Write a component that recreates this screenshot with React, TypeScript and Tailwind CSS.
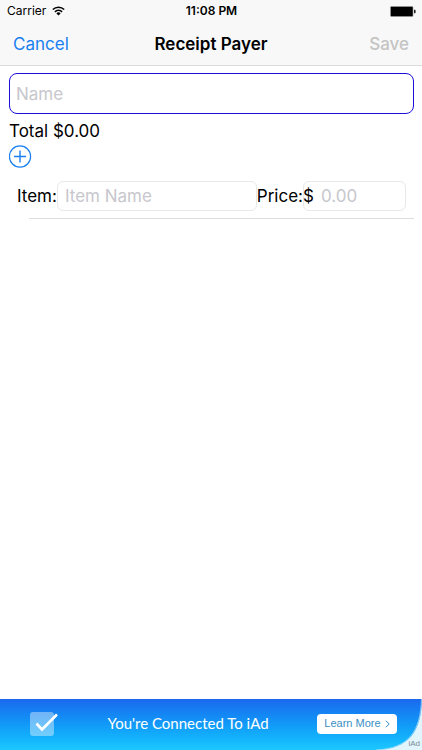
import { useState } from "react";

function StatusBar() {
  return (
    <div className="grid h-[22px] grid-cols-3 items-center pr-1.5 pl-[7px] text-xs text-black">
      <div className="flex items-center gap-1.5">
        <span>Carrier</span>
        <svg viewBox="0 0 13 10" className="h-[10px] w-[13px]" fill="none" stroke="#000" strokeWidth="1.6">
          <path d="M0.8 3.5a8.2 8.2 0 0 1 11.4 0" />
          <path d="M2.9 5.8a5.2 5.2 0 0 1 7.2 0" />
          <path d="M6.5 9.6 4.4 7.4a3 3 0 0 1 4.2 0z" fill="#000" stroke="none" />
        </svg>
      </div>
      <span className="text-center font-semibold">11:08 PM</span>
      <svg viewBox="0 0 26 11" className="h-[11px] w-[26px] justify-self-end">
        <rect x="0.5" y="0.5" width="22.5" height="10" rx="1" fill="#000" stroke="#999" strokeWidth="0.6" />
        <path d="M24 3.8h0.8a0.8 0.8 0 0 1 0.8 0.8v1.8a0.8 0.8 0 0 1-0.8 0.8H24z" fill="#222" />
      </svg>
    </div>
  );
}

function NavBar({ canSave }: { canSave: boolean }) {
  return (
    <nav className="grid h-[43px] grid-cols-[1fr_auto_1fr] items-center px-[13px] text-[17px] leading-6">
      <button type="button" className="justify-self-start text-[#1a80f0]">
        Cancel
      </button>
      <h1 className="font-semibold text-black">Receipt Payer</h1>
      <button
        type="button"
        disabled={!canSave}
        className="justify-self-end font-medium text-[#1a80f0] disabled:text-[#c4c4c4]"
      >
        Save
      </button>
    </nav>
  );
}

function AdBanner() {
  return (
    <footer className="relative flex h-[51px] items-center justify-between bg-linear-to-b from-[#1c68ee] to-[#1cc8ff] pr-[25px] pb-[2px] pl-[29px]">
      <svg
        viewBox="0 0 46 51"
        preserveAspectRatio="none"
        className="absolute right-0 bottom-0 h-[51px] w-[46px]"
      >
        <path d="M46 0C45 32 34 50 0 51H46z" fill="#e2f5fd" />
        <path d="M45.5 0C44.5 32 33 49.5 0 51" fill="none" stroke="#a4daf8" strokeWidth="0.8" />
      </svg>
      <svg viewBox="0 0 30 26" className="h-[26px] w-[30px]">
        <rect x="1" y="1" width="24" height="24" rx="3" fill="#fff" fillOpacity="0.4" />
        <path d="M7.5 12.5l5.5 6L28 3.5" fill="none" stroke="#fff" strokeWidth="2.6" />
      </svg>
      <p className="font-[Lato,sans-serif] text-[15px] text-white">
        You're Connected To iAd
      </p>
      <button
        type="button"
        className="flex h-5 w-20 items-center justify-center gap-1 rounded bg-white font-['Liberation_Sans',sans-serif] text-[11px] whitespace-nowrap text-[#3a8fc4]"
      >
        Learn More
        <svg viewBox="0 0 5 8" className="h-2 w-[5px]" fill="none" stroke="currentColor" strokeWidth="1">
          <path d="M0.8 0.8 4.2 4 0.8 7.2" />
        </svg>
      </button>
      <span className="absolute right-0.5 bottom-0.5 font-['Liberation_Sans',sans-serif] text-[8px] leading-none text-[#7d8c96]">
        iAd
      </span>
    </footer>
  );
}

export default function App() {
  const [name, setName] = useState("");
  const [item, setItem] = useState("");
  const [price, setPrice] = useState("");

  const total = Number(price) || 0;

  return (
    <div className="flex min-h-screen flex-col bg-white font-[Inter,sans-serif]">
      <header className="border-b border-[#dcdade] bg-[#f8f8f8]">
        <StatusBar />
        <NavBar canSave={name !== "" && total > 0} />
      </header>

      <main className="flex-1 pt-[7px] pr-2 pl-[9px] text-[17px] leading-6 text-black">
        <input
          aria-label="Name"
          placeholder="Name"
          value={name}
          onChange={(e) => setName(e.target.value)}
          className="block h-[41px] w-full rounded-lg border border-[#1a10d8] px-1.5 outline-none placeholder:text-[#c7c7cd]"
        />
        <p className="mt-[5px]">Total ${total.toFixed(2)}</p>
        <button type="button" aria-label="Add item" className="mt-[2px] block text-[#1a80f0]">
          <svg viewBox="0 0 23 23" className="size-[23px]" fill="none" stroke="currentColor" strokeWidth="1.2">
            <circle cx="11" cy="11.5" r="10.6" />
            <path d="M11 5.5v12M5 11.5h12" strokeWidth="1.4" />
          </svg>
        </button>

        <div className="mt-[13px] flex items-center px-2">
          <label htmlFor="item">Item:</label>
          <input
            id="item"
            placeholder="Item Name"
            value={item}
            onChange={(e) => setItem(e.target.value)}
            className="h-[30px] min-w-0 flex-1 rounded-md border border-[#e8e8e8] px-[7px] outline-none placeholder:text-[#c7c7cd]"
          />
          <label htmlFor="price">Price:</label>
          <div className="relative">
            <span className="absolute inset-y-0 left-0 flex items-center">$</span>
            <input
              id="price"
              inputMode="decimal"
              placeholder="0.00"
              value={price}
              onChange={(e) => setPrice(e.target.value)}
              className="block h-[30px] w-[103px] rounded-md border border-[#e8e8e8] pr-2 pl-[17px] outline-none placeholder:text-[#c7c7cd]"
            />
          </div>
        </div>
        <hr className="mt-[7px] ml-5 border-[#dedee0]" />
      </main>

      <AdBanner />
    </div>
  );
}
